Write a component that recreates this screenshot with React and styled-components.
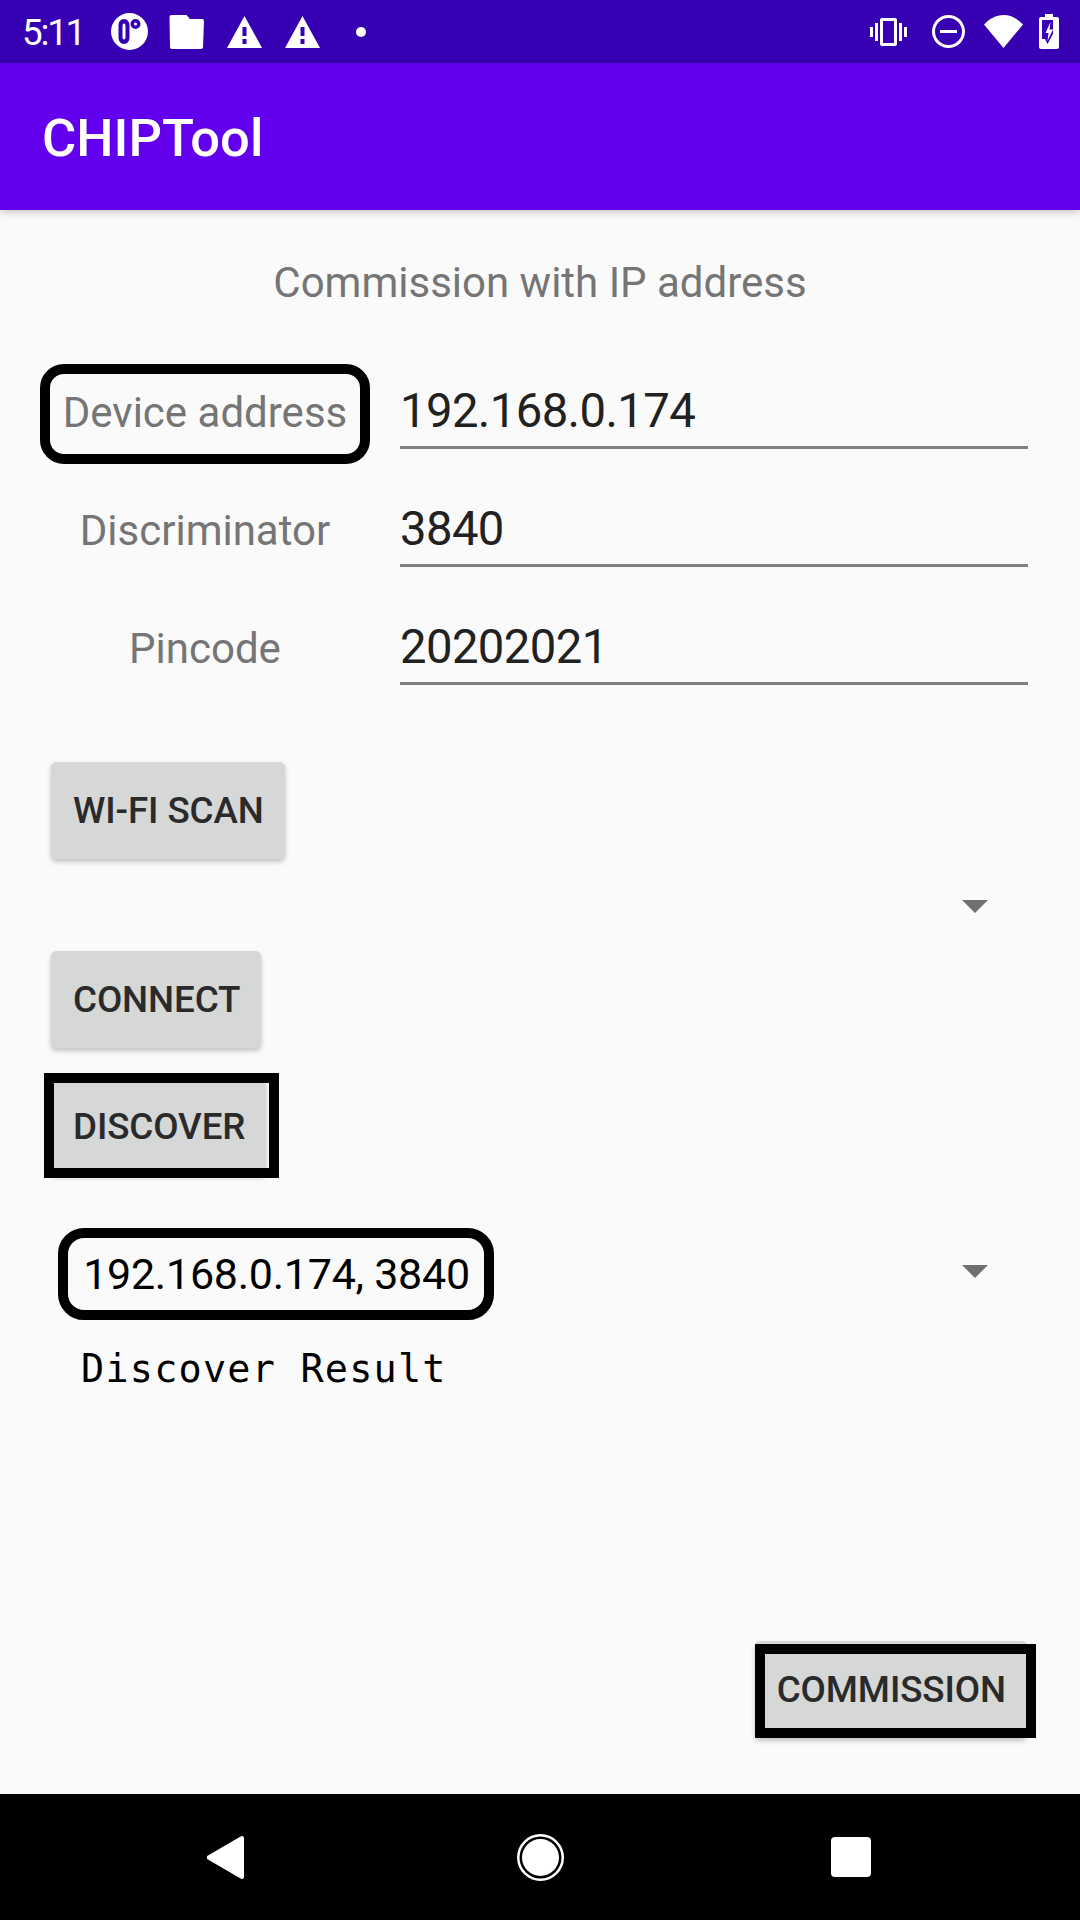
import React from "react";
import styled, { createGlobalStyle } from "styled-components";

const GlobalStyle = createGlobalStyle`
  html, body {
    margin: 0;
    padding: 0;
    background: #fafafa;
  }
  * {
    box-sizing: border-box;
  }
`;

const Screen = styled.div`
  width: 1080px;
  height: 1920px;
  display: flex;
  flex-direction: column;
  overflow: hidden;
  background: #fafafa;
  font-family: Roboto, "Liberation Sans", sans-serif;
`;

const StatusBar = styled.div`
  height: 63px;
  flex: none;
  display: flex;
  align-items: center;
  justify-content: space-between;
  padding: 0 21px 0 22px;
  background: #3700b3;
  color: #fff;
`;

const StatusGroup = styled.div`
  display: flex;
  align-items: center;
`;

const Clock = styled.span`
  width: 89px;
  font-size: 36.75px;
  letter-spacing: -2.2px;
  line-height: 63px;
  padding-top: 2px;
`;

const StatusIcon = styled.svg`
  display: block;
  flex: none;
  width: ${(props) => props.$w}px;
  height: ${(props) => props.$h}px;
  margin-right: ${(props) => props.$gap || 0}px;
  fill: #fff;
`;

const AppBar = styled.header`
  height: 147px;
  flex: none;
  display: flex;
  align-items: center;
  padding: 2px 0 0 42px;
  background: #6200ee;
  color: #fff;
  font-size: 52.5px;
  font-weight: 500;
  box-shadow: 0 2px 8px rgba(0, 0, 0, 0.22);
  position: relative;
`;

const Content = styled.main`
  flex: 1;
  display: flex;
  flex-direction: column;
  padding: 48px 0 56px;
`;

const Heading = styled.div`
  text-align: center;
  font-size: 42px;
  line-height: 49px;
  color: #757575;
`;

const Form = styled.div`
  margin: 46px 0 55px;
`;

const Row = styled.div`
  height: 118px;
  display: flex;
  align-items: center;
  padding-left: 40px;
`;

const LabelCell = styled.div`
  width: 330px;
  height: 100px;
  margin-top: 4px;
  padding-bottom: 4px;
  display: flex;
  align-items: center;
  justify-content: center;
  font-size: 42px;
  color: #757575;
  border: 10px solid ${(props) => (props.$framed ? "#000" : "transparent")};
  border-radius: 24px;
`;

const Field = styled.div`
  width: 628px;
  height: 74px;
  margin-left: 30px;
  display: flex;
  align-items: center;
  font-size: 47.25px;
  letter-spacing: -0.6px;
  color: #212121;
  border-bottom: 3px solid #808080;
`;

const ButtonRow = styled.div`
  margin-top: ${(props) => props.$mt || 0}px;
`;

const ActionButton = styled.button`
  display: block;
  height: 97px;
  padding: 0 21px 0 22px;
  margin-left: 51px;
  position: relative;
  border: 0;
  border-radius: 5px;
  background: #d6d7d7;
  color: #2a2a2a;
  font-family: inherit;
  font-size: 36.75px;
  font-weight: 500;
  letter-spacing: -0.1px;
  box-shadow: 0 3px 5px rgba(0, 0, 0, 0.22);
`;

const ButtonFrame = styled.span`
  position: absolute;
  top: ${(props) => props.$top}px;
  right: ${(props) => props.$right}px;
  bottom: ${(props) => props.$bottom}px;
  left: ${(props) => props.$left}px;
  border: 10px solid #000;
`;

const SpinnerRow = styled.div`
  height: 92px;
  margin-top: ${(props) => props.$mt || 0}px;
  display: flex;
  align-items: center;
  justify-content: space-between;
  padding: 0 92px 0 58px;
`;

const SpinnerValue = styled.div`
  width: 436px;
  height: 92px;
  display: flex;
  align-items: center;
  justify-content: center;
  padding-left: 1px;
  border: 10px solid #000;
  border-radius: 26px;
  font-size: 43px;
  letter-spacing: -0.25px;
  color: #000;
`;

const SpinnerArrow = styled.span`
  width: 0;
  height: 0;
  margin: ${(props) => (props.$lifted ? "0 0 5px auto" : "2px 0 0 auto")};
  border-left: 13px solid transparent;
  border-right: 13px solid transparent;
  border-top: 13px solid #707070;
`;

const ResultText = styled.div`
  margin: 25px 0 0 81px;
  font-family: "DejaVu Sans Mono", "Liberation Mono", monospace;
  font-size: 38.5px;
  letter-spacing: 1.2px;
  line-height: 47px;
  color: #000;
`;

const BottomActions = styled.div`
  margin-top: auto;
  display: flex;
  justify-content: flex-end;
  padding-right: 53px;
`;

const NavBar = styled.nav`
  height: 126px;
  flex: none;
  display: flex;
  align-items: center;
  background: #000;
  padding-left: 207px;
`;

const NavIcon = styled.svg`
  display: block;
  flex: none;
  fill: #fff;
  width: ${(props) => props.$w}px;
  height: ${(props) => props.$h}px;
  margin-right: ${(props) => props.$gap || 0}px;
`;

export default function App() {
  return (
    <Screen>
      <GlobalStyle />
      <StatusBar>
        <StatusGroup>
          <Clock>5:11</Clock>
          <StatusIcon $w={37} $h={37} $gap={21} viewBox="0 0 37 37">
            <path
              fillRule="evenodd"
              d="M18.500 0a18.500 18.500 0 1 1 0 37a18.500 18.500 0 0 1 0-37zM13 6c-3.500 0-5.500 3-5.500 7v11c0 4 2 7 5.500 7s5.500-3 5.500-7V13c0-4-2-7-5.500-7zM24.500 6a5 5 0 1 0 0 10a5 5 0 0 0 0-10z"
            />
            <path d="M11.500 13c0-1.500.5-2.500 1.500-2.500s1.500 1 1.500 2.500v11c0 1.500-.5 2.500-1.500 2.500s-1.500-1-1.500-2.500z" />
            <circle cx="24.500" cy="11" r="1.500" />
          </StatusIcon>
          <StatusIcon $w={35} $h={34} $gap={23} viewBox="0 0 35 34">
            <path d="M2.500 0h15l3.500 4h12a2 2 0 0 1 2 2l-1 26a2 2 0 0 1-2 2H3a2 2 0 0 1-2-2L.5 2a2 2 0 0 1 2-2z" />
          </StatusIcon>
          <StatusIcon $w={35} $h={32} $gap={23} viewBox="0 0 35 32">
            <path
              fillRule="evenodd"
              d="M17.500 0L35 32H0zM15.500 11v9h4v-9zM15.500 23v5h4v-5z"
            />
          </StatusIcon>
          <StatusIcon $w={35} $h={32} $gap={36} viewBox="0 0 35 32">
            <path
              fillRule="evenodd"
              d="M17.500 0L35 32H0zM15.500 11v9h4v-9zM15.500 23v5h4v-5z"
            />
          </StatusIcon>
          <StatusIcon $w={10} $h={10} viewBox="0 0 10 10">
            <circle cx="5" cy="5" r="5" />
          </StatusIcon>
        </StatusGroup>
        <StatusGroup>
          <StatusIcon $w={37} $h={28} $gap={25} viewBox="0 0 37 28">
            <path
              fillRule="evenodd"
              d="M0 9h3v10H0zM5 5h3v18H5zM29 5h3v18h-3zM34 9h3v10h-3zM12 0h13a2 2 0 0 1 2 2v24a2 2 0 0 1-2 2H12a2 2 0 0 1-2-2V2a2 2 0 0 1 2-2zM13 3v22h11V3z"
            />
          </StatusIcon>
          <StatusIcon $w={33} $h={33} $gap={19} viewBox="0 0 33 33">
            <path
              fillRule="evenodd"
              d="M16.500 0a16.500 16.500 0 1 1 0 33a16.500 16.500 0 0 1 0-33zM16.500 3a13.500 13.500 0 1 0 0 27a13.500 13.500 0 0 0 0-27zM8 15h17v3H8z"
            />
          </StatusIcon>
          <StatusIcon $w={39} $h={33} $gap={16} viewBox="0 0 39 33">
            <path d="M19.500 33L0 9.500C5 4 12 0 19.500 0S34 4 39 9.500z" />
          </StatusIcon>
          <StatusIcon $w={20} $h={35} viewBox="0 0 20 35">
            <path
              fillRule="evenodd"
              d="M6 0h8v3h4a2 2 0 0 1 2 2v28a2 2 0 0 1-2 2H2a2 2 0 0 1-2-2V5a2 2 0 0 1 2-2h4zM3 6v19h3l2.500 5L14 20V6zM11.500 8L6.500 19h3l-1 8L14 15.500h-3.500z"
            />
          </StatusIcon>
        </StatusGroup>
      </StatusBar>

      <AppBar>CHIPTool</AppBar>

      <Content>
        <Heading>Commission with IP address</Heading>

        <Form>
          <Row>
            <LabelCell $framed>Device address</LabelCell>
            <Field>192.168.0.174</Field>
          </Row>
          <Row>
            <LabelCell>Discriminator</LabelCell>
            <Field>3840</Field>
          </Row>
          <Row>
            <LabelCell>Pincode</LabelCell>
            <Field>20202021</Field>
          </Row>
        </Form>

        <ButtonRow>
          <ActionButton>WI-FI SCAN</ActionButton>
        </ButtonRow>
        <SpinnerRow>
          <SpinnerArrow />
        </SpinnerRow>
        <ButtonRow>
          <ActionButton>CONNECT</ActionButton>
        </ButtonRow>

        <ButtonRow $mt={30}>
          <ActionButton>
            DISCOVER
            <ButtonFrame $top={-5} $right={-13} $bottom={-3} $left={-7} />
          </ActionButton>
        </ButtonRow>

        <SpinnerRow $mt={53}>
          <SpinnerValue>192.168.0.174, 3840</SpinnerValue>
          <SpinnerArrow $lifted />
        </SpinnerRow>
        <ResultText>Discover Result</ResultText>

        <BottomActions>
          <ActionButton>
            COMMISSION
            <ButtonFrame $top={3} $right={-9} $bottom={0} $left={0} />
          </ActionButton>
        </BottomActions>
      </Content>

      <NavBar>
        <NavIcon $w={37} $h={43} $gap={273} viewBox="0 0 37 43">
          <path d="M37 2v39a2 2 0 0 1-3 1.700L1 23.500a2.200 2.200 0 0 1 0-4L34 .3A2 2 0 0 1 37 2z" />
        </NavIcon>
        <NavIcon $w={47} $h={47} $gap={267} viewBox="0 0 47 47">
          <path
            fillRule="evenodd"
            d="M23.500 0a23.500 23.500 0 1 1 0 47a23.500 23.500 0 0 1 0-47zM23.500 2.500a21 21 0 1 0 0 42a21 21 0 0 0 0-42z"
          />
          <circle cx="23.500" cy="23.500" r="18.500" />
        </NavIcon>
        <NavIcon $w={40} $h={40} viewBox="0 0 40 40">
          <rect width="40" height="40" rx="4" />
        </NavIcon>
      </NavBar>
    </Screen>
  );
}
